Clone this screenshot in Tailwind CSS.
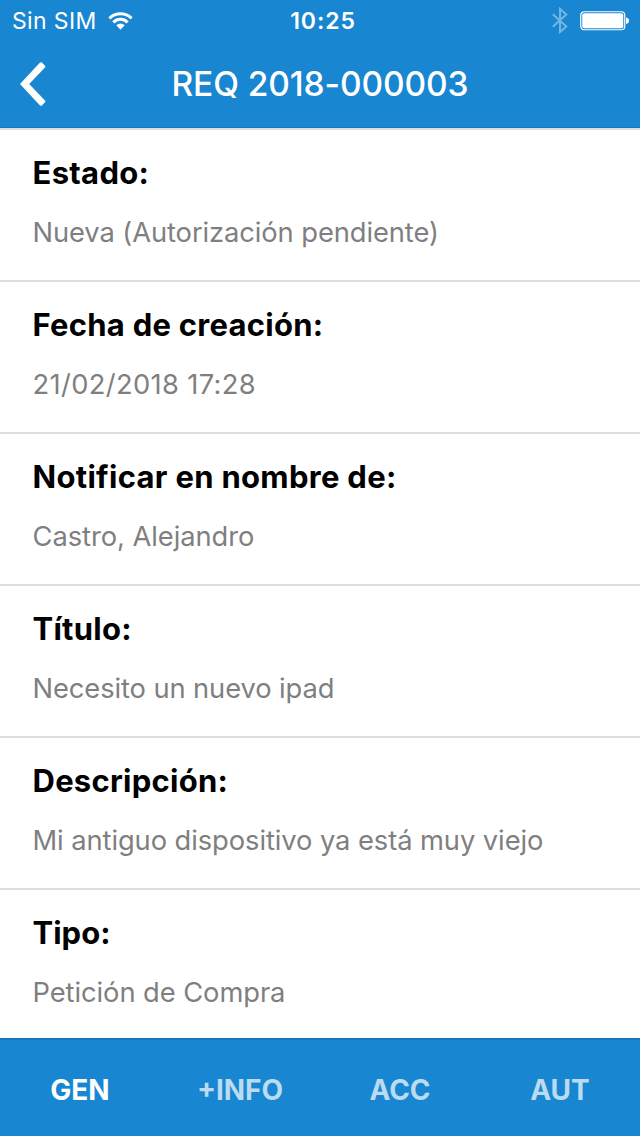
<!DOCTYPE html>
<html lang="es">
<head>
    <meta charset="UTF-8">
    <meta name="viewport" content="width=device-width, initial-scale=1.0">
    <script src="https://cdn.jsdelivr.net/npm/@tailwindcss/browser@4"></script>
    <title>REQ 2018-000003</title>
</head>
<body class="h-screen flex flex-col overflow-hidden bg-white font-['Inter',sans-serif]">

    <header class="h-32 shrink-0 bg-[#1886d0] text-white border-b border-[#1478bb]">
        <!-- Status bar -->
        <div class="h-[41px] grid grid-cols-3 items-center pl-3 pr-[11px]">
            <div class="flex items-center gap-3">
                <span class="pt-px text-[23px] leading-[41px] tracking-[0.35px] whitespace-nowrap">Sin SIM</span>
                <svg class="w-[25px] h-[18px] -ml-px mb-px" viewBox="0 0 25 18" fill="currentColor">
                    <path d="M.4 5.200a17.200 17.200 0 0 1 24.200 0L22.500 7.400a14.200 14.200 0 0 0-20 0z"/>
                    <path d="M4.300 9.200a11.600 11.600 0 0 1 16.400 0L18.600 11.400a8.600 8.600 0 0 0-12.200 0z"/>
                    <path d="M8.300 13.300a6 6 0 0 1 8.400 0L12.500 17.700z"/>
                </svg>
            </div>
            <span class="pt-px pl-[5px] text-center text-[23px] leading-[41px] tracking-[0.9px] font-semibold">10:25</span>
            <div class="flex items-center justify-end gap-3 mb-px">
                <svg class="w-4 h-[27px] text-[#74b6e3]" viewBox="0 0 16 27" fill="none" stroke="currentColor" stroke-width="2">
                    <path d="M.8 7.200L14.300 19.400 8 25V2l6.300 5.600L.8 19.800"/>
                </svg>
                <svg class="w-[49px] h-5" viewBox="0 0 49 20">
                    <rect x=".75" y=".75" width="44" height="18" rx="3.500" fill="none" stroke="currentColor" stroke-width="1.200"/>
                    <rect x="2.250" y="2.250" width="41" height="15" rx="2" fill="currentColor"/>
                    <path d="M46 6.500q3 .5 3 3.200t-3 3.300z" fill="currentColor"/>
                </svg>
            </div>
        </div>
        <!-- Title bar -->
        <div class="h-[86px] grid grid-cols-[80px_1fr_80px] items-center">
            <svg class="w-[26px] h-11 ml-[19.5px] mb-px" viewBox="0 0 26 44" fill="currentColor">
                <path d="M20 .6q1-.9 1.900 0l3.100 3.100q.8.900 0 1.800L9.200 22l15.800 16.500q.8.900 0 1.800l-3.100 3.100q-.9.900-1.900 0L0 22z"/>
            </svg>
            <h1 class="text-center text-[33.5px] leading-[86px] tracking-[-0.1px] font-medium whitespace-nowrap">REQ 2018-000003</h1>
        </div>
    </header>

    <main class="flex-1 min-h-0 overflow-hidden border-t-2 border-[#dedede]">
        <section class="h-[152px] border-b-2 border-[#dedede] px-[32.5px] pt-[23px]">
            <h2 class="text-[31px] leading-10 tracking-[0.3px] font-bold text-black">Estado:</h2>
            <p class="mt-5 text-[27.3px] leading-10 tracking-[-0.08px] text-[#7f7f7f]">Nueva (Autorización pendiente)</p>
        </section>
        <section class="h-[152px] border-b-2 border-[#dedede] px-[32.5px] pt-[23px]">
            <h2 class="text-[31px] leading-10 tracking-[0.26px] font-bold text-black">Fecha de creación:</h2>
            <p class="mt-5 text-[27.3px] leading-10 tracking-[0.35px] text-[#7f7f7f]">21/02/2018 17:28</p>
        </section>
        <section class="h-[152px] border-b-2 border-[#dedede] px-[32.5px] pt-[23px]">
            <h2 class="text-[31px] leading-10 tracking-[0.3px] font-bold text-black">Notificar en nombre de:</h2>
            <p class="mt-5 text-[27.3px] leading-10 tracking-[-0.05px] text-[#7f7f7f]">Castro, Alejandro</p>
        </section>
        <section class="h-[152px] border-b-2 border-[#dedede] px-[32.5px] pt-[23px]">
            <h2 class="text-[31px] leading-10 tracking-[0.26px] font-bold text-black">Título:</h2>
            <p class="mt-5 text-[27.3px] leading-10 tracking-[-0.09px] text-[#7f7f7f]">Necesito un nuevo ipad</p>
        </section>
        <section class="h-[152px] border-b-2 border-[#dedede] px-[32.5px] pt-[23px]">
            <h2 class="text-[31px] leading-10 tracking-[0.26px] font-bold text-black">Descripción:</h2>
            <p class="mt-5 text-[27.3px] leading-10 tracking-[-0.07px] text-[#7f7f7f]">Mi antiguo dispositivo ya está muy viejo</p>
        </section>
        <section class="h-[152px] px-[32.5px] pt-[23px]">
            <h2 class="text-[31px] leading-10 font-bold text-black">Tipo:</h2>
            <p class="mt-5 text-[27.3px] leading-10 tracking-[-0.06px] text-[#7f7f7f]">Petición de Compra</p>
        </section>
    </main>

    <nav class="h-[98px] shrink-0 bg-[#1886d0] border-t-2 border-[#1478bb] grid grid-cols-4 items-center pt-1 text-center text-[28px] font-bold text-[#badbf1]">
        <a class="text-white">GEN</a>
        <a>+INFO</a>
        <a>ACC</a>
        <a>AUT</a>
    </nav>

</body>
</html>
